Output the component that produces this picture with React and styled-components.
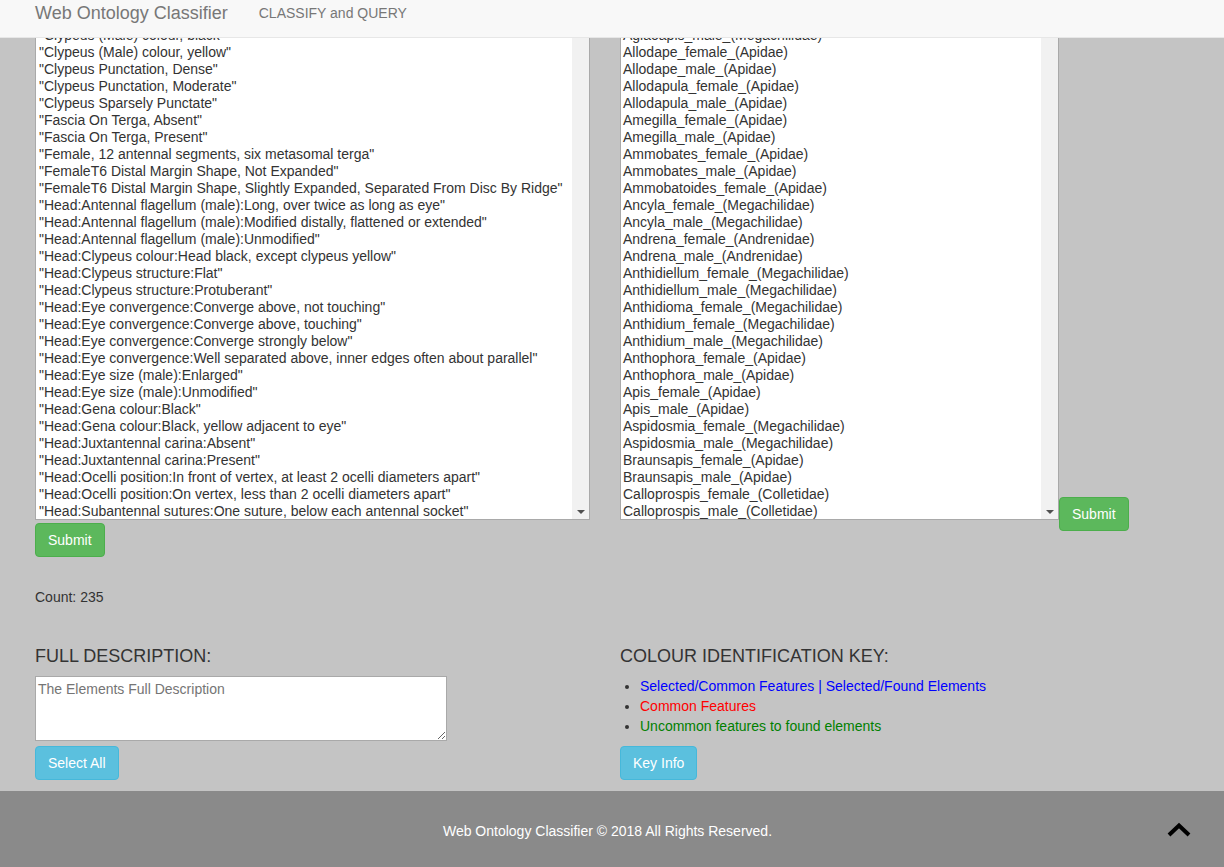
import React from "react";
import styled, { createGlobalStyle } from "styled-components";

const GlobalStyle = createGlobalStyle`
  html, body {
    margin: 0;
    padding: 0;
    background: #c4c4c4;
    font-family: "Liberation Sans", Arial, sans-serif;
    font-size: 14px;
    color: #333;
  }
`;

const Navbar = styled.nav`
  position: fixed;
  top: 0;
  left: 0;
  right: 0;
  height: 38px;
  box-sizing: border-box;
  background: #f8f8f8;
  border-bottom: 1px solid #e7e7e7;
  display: flex;
  align-items: flex-start;
  padding: 3px 0 0 35px;
  z-index: 10;
`;

const Brand = styled.span`
  font-size: 18px;
  line-height: 20px;
  color: #777;
`;

const NavLink = styled.span`
  font-size: 14px;
  line-height: 20px;
  color: #777;
  margin-left: 31px;
`;

const Main = styled.main`
  padding: 24px 0 11px 35px;
`;

const TopRow = styled.div`
  display: flex;
  align-items: flex-start;
`;

const LeftCol = styled.div`
  width: 585px;
`;

const RightCol = styled.div`
  display: flex;
  align-items: flex-end;
`;

const ListBox = styled.div`
  width: ${(p) => p.width}px;
  height: 496px;
  box-sizing: border-box;
  border: 1px solid #a9a9a9;
  background: #fff;
  display: flex;
  overflow: hidden;
`;

const Items = styled.ul`
  flex: 1;
  list-style: none;
  margin: 0;
  padding: 2px 0 0 ${(p) => p.pad}px;
  overflow: hidden;
`;

const Item = styled.li`
  font-size: 14px;
  line-height: 17px;
  height: 17px;
  white-space: nowrap;
  color: #333;
`;

const ScrollTrack = styled.div`
  width: 17px;
  background: #f1f1f1;
  display: flex;
  flex-direction: column;
  justify-content: flex-end;
  align-items: center;
  padding-bottom: 5px;
  box-sizing: border-box;
`;

const Arrow = styled.div`
  width: 0;
  height: 0;
  border-left: 4px solid transparent;
  border-right: 4px solid transparent;
  border-top: 4px solid #505050;
`;

const Button = styled.button`
  font-family: "Liberation Sans", Arial, sans-serif;
  font-size: 14px;
  line-height: 20px;
  padding: 6px 12px;
  border-radius: 4px;
  color: #fff;
  cursor: pointer;
  background: ${(p) => (p.variant === "info" ? "#5bc0de" : "#5cb85c")};
  border: 1px solid ${(p) => (p.variant === "info" ? "#46b8da" : "#4cae4c")};
`;

const LeftSubmit = styled(Button)`
  margin-top: 3px;
`;

const RightSubmit = styled(Button)`
  margin-bottom: -11px;
`;

const Count = styled.p`
  margin: 30px 0 0;
  line-height: 20px;
`;

const BottomRow = styled.div`
  display: flex;
  margin-top: 39px;
`;

const Section = styled.div`
  width: ${(p) => p.width}px;
`;

const Heading = styled.h4`
  margin: 0 0 10px;
  font-size: 18px;
  line-height: 20px;
  font-weight: normal;
  color: #333;
`;

const TextArea = styled.textarea`
  display: block;
  width: 412px;
  height: 65px;
  box-sizing: border-box;
  border: 1px solid #a9a9a9;
  padding: 4px 2px 2px;
  font-family: "Liberation Sans", Arial, sans-serif;
  font-size: 14px;
  margin: 0 0 5px;
  &::placeholder {
    color: #757575;
  }
`;

const KeyList = styled.ul`
  margin: 0 0 10px;
  padding-left: 20px;
`;

const KeyItem = styled.li`
  line-height: 20px;
  color: #333;
  & > span {
    color: ${(p) => p.color};
  }
`;

const Footer = styled.footer`
  position: relative;
  height: 76px;
  box-sizing: border-box;
  padding-top: 4px;
  background: #8a8a8a;
  display: flex;
  align-items: center;
  justify-content: center;
`;

const FooterText = styled.p`
  margin: 0 0 0 -9px;
  color: #fff;
  font-size: 14px;
`;

const TopLink = styled.a`
  position: absolute;
  right: 33px;
  top: 31px;
  display: block;
  line-height: 0;
`;

const leftItems = [
  '"Clypeus (Male) colour, black"',
  '"Clypeus (Male) colour, yellow"',
  '"Clypeus Punctation, Dense"',
  '"Clypeus Punctation, Moderate"',
  '"Clypeus Sparsely Punctate"',
  '"Fascia On Terga, Absent"',
  '"Fascia On Terga, Present"',
  '"Female, 12 antennal segments, six metasomal terga"',
  '"FemaleT6 Distal Margin Shape, Not Expanded"',
  '"FemaleT6 Distal Margin Shape, Slightly Expanded, Separated From Disc By Ridge"',
  '"Head:Antennal flagellum (male):Long, over twice as long as eye"',
  '"Head:Antennal flagellum (male):Modified distally, flattened or extended"',
  '"Head:Antennal flagellum (male):Unmodified"',
  '"Head:Clypeus colour:Head black, except clypeus yellow"',
  '"Head:Clypeus structure:Flat"',
  '"Head:Clypeus structure:Protuberant"',
  '"Head:Eye convergence:Converge above, not touching"',
  '"Head:Eye convergence:Converge above, touching"',
  '"Head:Eye convergence:Converge strongly below"',
  '"Head:Eye convergence:Well separated above, inner edges often about parallel"',
  '"Head:Eye size (male):Enlarged"',
  '"Head:Eye size (male):Unmodified"',
  '"Head:Gena colour:Black"',
  '"Head:Gena colour:Black, yellow adjacent to eye"',
  '"Head:Juxtantennal carina:Absent"',
  '"Head:Juxtantennal carina:Present"',
  '"Head:Ocelli position:In front of vertex, at least 2 ocelli diameters apart"',
  '"Head:Ocelli position:On vertex, less than 2 ocelli diameters apart"',
  '"Head:Subantennal sutures:One suture, below each antennal socket"',
];

const rightItems = [
  "Aglaoapis_male_(Megachilidae)",
  "Allodape_female_(Apidae)",
  "Allodape_male_(Apidae)",
  "Allodapula_female_(Apidae)",
  "Allodapula_male_(Apidae)",
  "Amegilla_female_(Apidae)",
  "Amegilla_male_(Apidae)",
  "Ammobates_female_(Apidae)",
  "Ammobates_male_(Apidae)",
  "Ammobatoides_female_(Apidae)",
  "Ancyla_female_(Megachilidae)",
  "Ancyla_male_(Megachilidae)",
  "Andrena_female_(Andrenidae)",
  "Andrena_male_(Andrenidae)",
  "Anthidiellum_female_(Megachilidae)",
  "Anthidiellum_male_(Megachilidae)",
  "Anthidioma_female_(Megachilidae)",
  "Anthidium_female_(Megachilidae)",
  "Anthidium_male_(Megachilidae)",
  "Anthophora_female_(Apidae)",
  "Anthophora_male_(Apidae)",
  "Apis_female_(Apidae)",
  "Apis_male_(Apidae)",
  "Aspidosmia_female_(Megachilidae)",
  "Aspidosmia_male_(Megachilidae)",
  "Braunsapis_female_(Apidae)",
  "Braunsapis_male_(Apidae)",
  "Calloprospis_female_(Colletidae)",
  "Calloprospis_male_(Colletidae)",
];

const FakeSelect = ({ items, width, pad }) => (
  <ListBox width={width}>
    <Items pad={pad}>
      {items.map((it) => (
        <Item key={it}>{it}</Item>
      ))}
    </Items>
    <ScrollTrack>
      <Arrow />
    </ScrollTrack>
  </ListBox>
);

export default function App() {
  return (
    <>
      <GlobalStyle />
      <Navbar>
        <Brand>Web Ontology Classifier</Brand>
        <NavLink>CLASSIFY and QUERY</NavLink>
      </Navbar>
      <Main>
        <TopRow>
          <LeftCol>
            <FakeSelect items={leftItems} width={555} pad={3} />
            <LeftSubmit>Submit</LeftSubmit>
          </LeftCol>
          <RightCol>
            <FakeSelect items={rightItems} width={439} pad={2} />
            <RightSubmit>Submit</RightSubmit>
          </RightCol>
        </TopRow>
        <Count>Count: 235</Count>
        <BottomRow>
          <Section width={585}>
            <Heading>FULL DESCRIPTION:</Heading>
            <TextArea placeholder="The Elements Full Description" />
            <Button variant="info">Select All</Button>
          </Section>
          <Section width={500}>
            <Heading>COLOUR IDENTIFICATION KEY:</Heading>
            <KeyList>
              <KeyItem color="#0000ff">
                <span>Selected/Common Features | Selected/Found Elements</span>
              </KeyItem>
              <KeyItem color="#ff0000">
                <span>Common Features</span>
              </KeyItem>
              <KeyItem color="#008000">
                <span>Uncommon features to found elements</span>
              </KeyItem>
            </KeyList>
            <Button variant="info">Key Info</Button>
          </Section>
        </BottomRow>
      </Main>
      <Footer>
        <FooterText>Web Ontology Classifier © 2018 All Rights Reserved.</FooterText>
        <TopLink href="#top" aria-label="Back to top">
          <svg width="24" height="16" viewBox="0 0 24 16">
            <path d="M2 13 L12 3.5 L22 13" fill="none" stroke="#000" strokeWidth="4" />
          </svg>
        </TopLink>
      </Footer>
    </>
  );
}
